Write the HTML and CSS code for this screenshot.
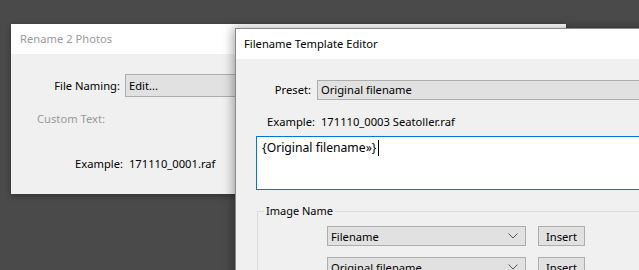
FILE: index.html
```html
<!DOCTYPE html>
<html lang="en">
<head>
    <meta charset="UTF-8">
    <meta name="viewport" content="width=device-width, initial-scale=1.0">
    <title>Rename Photos</title>
    <link rel="stylesheet" href="styles.css">
</head>
<body>
    <div class="desk">
        <section class="dlg dlg-rename">
            <header class="dlg-title muted">Rename 2 Photos</header>
            <div class="dlg-body">
                <div class="row row-naming">
                    <span class="lbl">File Naming:</span>
                    <div class="select">Edit...</div>
                </div>
                <div class="row row-custom">
                    <span class="muted">Custom Text:</span>
                </div>
                <div class="row row-example">
                    <span class="lbl-ex">Example:</span>
                    <span>171110_0001.raf</span>
                </div>
            </div>
        </section>

        <section class="dlg dlg-editor">
            <header class="dlg-title">Filename Template Editor</header>
            <div class="dlg-body">
                <div class="row row-preset">
                    <span class="lbl">Preset:</span>
                    <div class="select">Original filename</div>
                </div>
                <div class="row row-example2">
                    <span class="lbl-ex">Example:</span>
                    <span>171110_0003 Seatoller.raf</span>
                </div>
                <div class="template">
                    <span>{Original filename»}</span><span class="caret"></span>
                </div>
                <div class="group">
                    <span class="group-label">Image Name</span>
                    <div class="token-row">
                        <div class="combo">
                            <span>Filename</span>
                            <svg width="10" height="6" viewBox="0 0 10 6"><polyline points="0.5,0.5 5,5 9.5,0.5" fill="none" stroke="#555" stroke-width="1"/></svg>
                        </div>
                        <button class="btn">Insert</button>
                    </div>
                    <div class="token-row">
                        <div class="combo">
                            <span>Original filename</span>
                            <svg width="10" height="6" viewBox="0 0 10 6"><polyline points="0.5,0.5 5,5 9.5,0.5" fill="none" stroke="#555" stroke-width="1"/></svg>
                        </div>
                        <button class="btn">Insert</button>
                    </div>
                </div>
            </div>
        </section>
    </div>
</body>
</html>
```

FILE: styles.css
```css
body {
    margin: 0;
    background: #4a4a4a;
    font-family: "Noto Sans", "Open Sans", sans-serif;
    font-size: 11.2px;
    color: #000;
    overflow: hidden;
}

.desk {
    position: relative;
    width: 639px;
    height: 270px;
    overflow: hidden;
}

.dlg {
    position: absolute;
    background: #f0f0f0;
    display: flex;
    flex-direction: column;
}

.dlg-rename {
    left: 11px;
    top: 24px;
    width: 555px;
    height: 170px;
    box-shadow: 0 2px 6px rgba(0,0,0,0.35);
}

.dlg-editor {
    left: 235px;
    top: 28px;
    width: 440px;
    height: 270px;
    border: 1px solid #8a8a8a;
    box-shadow: -2px 0 10px rgba(0,0,0,0.35);
}

.dlg-title {
    height: 30px;
    line-height: 30px;
    background: #fff;
    padding-left: 9px;
    white-space: nowrap;
}

.dlg-editor .dlg-title {
    padding-left: 8px;
}

.muted {
    color: #9a9a9a;
}

.row {
    display: flex;
    align-items: center;
    line-height: 16px;
    white-space: nowrap;
}

.select {
    background: #e1e1e1;
    border: 1px solid #adadad;
    box-sizing: border-box;
    padding-left: 3px;
    display: flex;
    align-items: center;
}

/* rename dialog */
.row-naming {
    margin-top: 20px;
}

.row-naming .lbl {
    width: 109px;
    text-align: right;
}

.row-naming .select {
    margin-left: 5px;
    width: 200px;
    height: 23px;
}

.row-custom {
    margin-top: 14px;
    padding-left: 26px;
}

.row-example {
    margin-top: 29px;
    padding-left: 64px;
}

.lbl-ex {
    margin-right: 6px;
}

/* template editor */
.row-preset {
    margin-top: 21px;
}

.row-preset .lbl {
    width: 75px;
    text-align: right;
}

.row-preset .select {
    margin-left: 6px;
    width: 340px;
    height: 20px;
}

.row-example2 {
    margin-top: 14px;
    padding-left: 31px;
}

.template {
    margin: 6px 0 0 20px;
    width: 400px;
    height: 54px;
    box-sizing: border-box;
    border: 1px solid #0078d7;
    background: #fff;
    padding: 2px 5px;
    font-size: 12.2px;
    line-height: 18px;
    display: flex;
    align-items: flex-start;
}

.caret {
    width: 1px;
    height: 16px;
    background: #000;
    margin: 1px 0 0 2px;
}

.group {
    position: relative;
    margin: 21px 0 0 21px;
    width: 420px;
    height: 80px;
    border: 1px solid #dcdcdc;
    padding: 14px 0 0 69px;
    display: flex;
    flex-direction: column;
    gap: 11px;
}

.group-label {
    position: absolute;
    top: -9px;
    left: 6px;
    padding: 0 2px;
    background: #f0f0f0;
    font-size: 11px;
    line-height: 16px;
}

.token-row {
    display: flex;
    gap: 12px;
}

.combo {
    width: 199px;
    height: 20px;
    box-sizing: border-box;
    background: #e1e1e1;
    border: 1px solid #adadad;
    padding: 0 7px 0 3px;
    display: flex;
    align-items: center;
    justify-content: space-between;
}

.btn {
    width: 47px;
    height: 20px;
    background: #e1e1e1;
    border: 1px solid #adadad;
    font: inherit;
    padding: 0;
    color: #000;
}
```
